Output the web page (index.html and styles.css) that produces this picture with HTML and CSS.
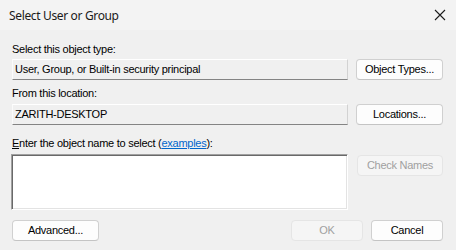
FILE: index.html
```html
<!DOCTYPE html>
<html>
<head>
<meta charset="utf-8">
<link rel="stylesheet" href="styles.css">
</head>
<body>
<div class="dialog">
  <div class="titlebar">
    <span class="title">Select User or Group</span>
    <span class="close">
      <svg width="12" height="12" viewBox="0 0 12 12"><path d="M1 1 L11 11 M11 1 L1 11" stroke="#1b1b1b" stroke-width="1.1" fill="none"/></svg>
    </span>
  </div>
  <div class="content">
    <div class="label l1">Select this object type:</div>
    <div class="row">
      <div class="field">User, Group, or Built-in security principal</div>
      <button class="btn">Object Types...</button>
    </div>
    <div class="label l2">From this location:</div>
    <div class="row">
      <div class="field">ZARITH-DESKTOP</div>
      <button class="btn">Locations...</button>
    </div>
    <div class="label l3"><u>E</u>nter the object name to select (<a class="link">examples</a>):</div>
    <div class="row row3">
      <div class="box"></div>
      <button class="btn disabled check">Check Names</button>
    </div>
    <div class="footer">
      <button class="btn adv">Advanced...</button>
      <div class="spacer"></div>
      <button class="btn disabled small">OK</button>
      <button class="btn small">Cancel</button>
    </div>
  </div>
</div>
</body>
</html>
```
FILE: styles.css
```css
html, body {
  margin: 0;
  padding: 0;
  background: #f0f0f0;
}
.dialog {
  width: 456px;
  height: 250px;
  background: #f0f0f0;
  font-family: "Liberation Sans", Arial, sans-serif;
  font-size: 11px;
  line-height: 13px;
  letter-spacing: -0.27px;
  color: #000;
  overflow: hidden;
}
.titlebar {
  height: 30px;
  background: #f3f3f3;
  display: flex;
  align-items: center;
  justify-content: space-between;
  padding: 0 9px 0 9px;
  box-sizing: border-box;
}
.title {
  font-family: "Noto Sans", "Open Sans", sans-serif;
  font-size: 12px;
  letter-spacing: -0.35px;
  color: #1a1a1a;
}
.close {
  display: flex;
  width: 12px;
  height: 12px;
  margin-right: 1px;
}
.content {
  padding: 13px 13px 0 12px;
  display: flex;
  flex-direction: column;
}
.label {
  height: 13px;
  white-space: nowrap;
}
.l1 { margin-bottom: 3px; }
.l2 { margin-top: 7px; margin-bottom: 4px; }
.l3 { margin-top: 12px; margin-bottom: 4px; }
.row {
  display: grid;
  grid-template-columns: 1fr 87px;
  column-gap: 8px;
  align-items: start;
}
.field {
  height: 21px;
  box-sizing: border-box;
  background: #f0f0f0;
  border-top: 1px solid #ffffff;
  border-left: 1px solid #fbfbfb;
  border-right: 1px solid #d2d2d2;
  border-bottom: 1px solid #848484;
  padding: 0 3px 0 2px;
  display: flex;
  align-items: center;
  white-space: nowrap;
}
.btn {
  height: 21px;
  box-sizing: border-box;
  background: #fdfdfd;
  border: 1px solid #d0d0d0;
  border-bottom-color: #c4c4c4;
  border-radius: 4px;
  font-family: "Liberation Sans", Arial, sans-serif;
  font-size: 11px;
  line-height: 13px;
  letter-spacing: -0.27px;
  color: #000;
  padding: 0;
  margin: 0;
}
.btn.disabled {
  background: #f5f5f5;
  border-color: #e5e5e5;
  color: #a0a0a0;
}
.row3 .check {
  margin-top: 1px;
  margin-left: 1px;
  width: 86px;
}
.box {
  height: 56px;
  margin-left: -1px;
  background: #ffffff;
  border-top: 1px solid #a0a0a0;
  border-left: 1px solid #a0a0a0;
  border-right: 1px solid #ffffff;
  border-bottom: 1px solid #ffffff;
  box-shadow: inset 1px 1px 0 #696969, inset -1px -1px 0 #e3e3e3;
  box-sizing: border-box;
}
.link {
  color: #0066cc;
  text-decoration: underline;
}
.footer {
  margin-top: 10px;
  display: flex;
  align-items: center;
  column-gap: 8px;
}
.adv { width: 87px; }
.spacer { flex: 1; }
.small { width: 72px; }
```
